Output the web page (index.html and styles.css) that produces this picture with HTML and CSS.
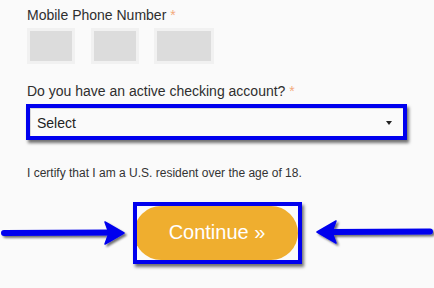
FILE: index.html
```html
<!DOCTYPE html>
<html>
<head>
<meta charset="utf-8">
<link rel="stylesheet" href="styles.css">
</head>
<body>
<div class="form">
  <div class="label">Mobile Phone Number <span class="req">*</span></div>
  <div class="phone">
    <div class="pbox w48"></div>
    <div class="pbox w48"></div>
    <div class="pbox w60"></div>
  </div>
  <div class="label q">Do you have an active checking account? <span class="req">*</span></div>
  <div class="hl select-hl">
    <div class="select">
      <span>Select</span>
      <span class="caret"></span>
    </div>
  </div>
  <p class="certify">I certify that I am a U.S. resident over the age of 18.</p>
</div>
<div class="btn-row">
  <svg class="arrows" width="434" height="62" viewBox="0 0 434 62">
    <defs>
      <filter id="sh" x="-10%" y="-50%" width="120%" height="200%">
        <feDropShadow dx="2" dy="2" stdDeviation="1.2" flood-color="#000" flood-opacity="0.55"/>
      </filter>
    </defs>
    <g filter="url(#sh)" fill="#0000ee" stroke="#0000ee">
      <line x1="4" y1="31" x2="112" y2="30.5" stroke-width="6" stroke-linecap="round"/>
      <polygon points="105,20 124,31 105,42 109,31" stroke-width="1.5" stroke-linejoin="round"/>
      <line x1="330" y1="30" x2="430" y2="29.5" stroke-width="6" stroke-linecap="round"/>
      <polygon points="336,19 317,30 336,41 332,30" stroke-width="1.5" stroke-linejoin="round"/>
    </g>
  </svg>
  <div class="hl btn-hl">
    <div class="btn">Continue »</div>
  </div>
</div>
</body>
</html>
```
FILE: styles.css
```css
html, body {
  margin: 0;
  padding: 0;
  background: #fafafa;
}
body {
  width: 434px;
  height: 288px;
  overflow: hidden;
  font-family: "Liberation Sans", Arial, sans-serif;
  color: #333;
}
.form {
  padding: 7px 0 0 27px;
}
.label {
  font-size: 14px;
  line-height: 16px;
  color: #2e2e2e;
}
.req {
  color: #f3a97c;
}
.phone {
  display: flex;
  gap: 16px;
  margin-top: 5px;
}
.pbox {
  box-sizing: border-box;
  height: 36px;
  background: #dcdcdc;
  border: 3px solid #f1f1f1;
}
.w48 { width: 48px; }
.w60 { width: 60px; margin-left: -1px; }
.label.q {
  margin-top: 19px;
}
.hl {
  box-sizing: border-box;
  border: 4px solid #0000ee;
  box-shadow: 2px 3px 3px rgba(0, 0, 0, 0.55);
}
.select-hl {
  margin-top: 5px;
  margin-left: -1px;
  width: 381px;
  height: 36px;
}
.select {
  box-sizing: border-box;
  height: 100%;
  display: flex;
  align-items: center;
  justify-content: space-between;
  padding: 0 11px 0 6px;
  background: #fafafa;
  border-top: 1px solid #d8d8d8;
  border-left: 1px solid #d8d8d8;
  font-size: 14px;
  color: #222;
}
.caret {
  width: 0;
  height: 0;
  border-left: 3.5px solid transparent;
  border-right: 3.5px solid transparent;
  border-top: 4px solid #222;
}
.certify {
  margin: 26px 0 0;
  font-size: 12px;
  line-height: 14px;
  color: #333;
}
.btn-row {
  position: relative;
  margin-top: 22px;
  height: 62px;
}
.arrows {
  position: absolute;
  left: 0;
  top: 0;
}
.btn-hl {
  margin-left: 133px;
  width: 169px;
  height: 62px;
  background: #fafafa;
  overflow: hidden;
}
.btn {
  height: 100%;
  margin-left: -3px;
  background: #efae2f;
  border-radius: 27px;
  display: flex;
  align-items: center;
  justify-content: center;
  color: #fff;
  font-size: 20px;
  padding-left: 2px;
  padding-bottom: 2px;
  box-sizing: border-box;
}
```
